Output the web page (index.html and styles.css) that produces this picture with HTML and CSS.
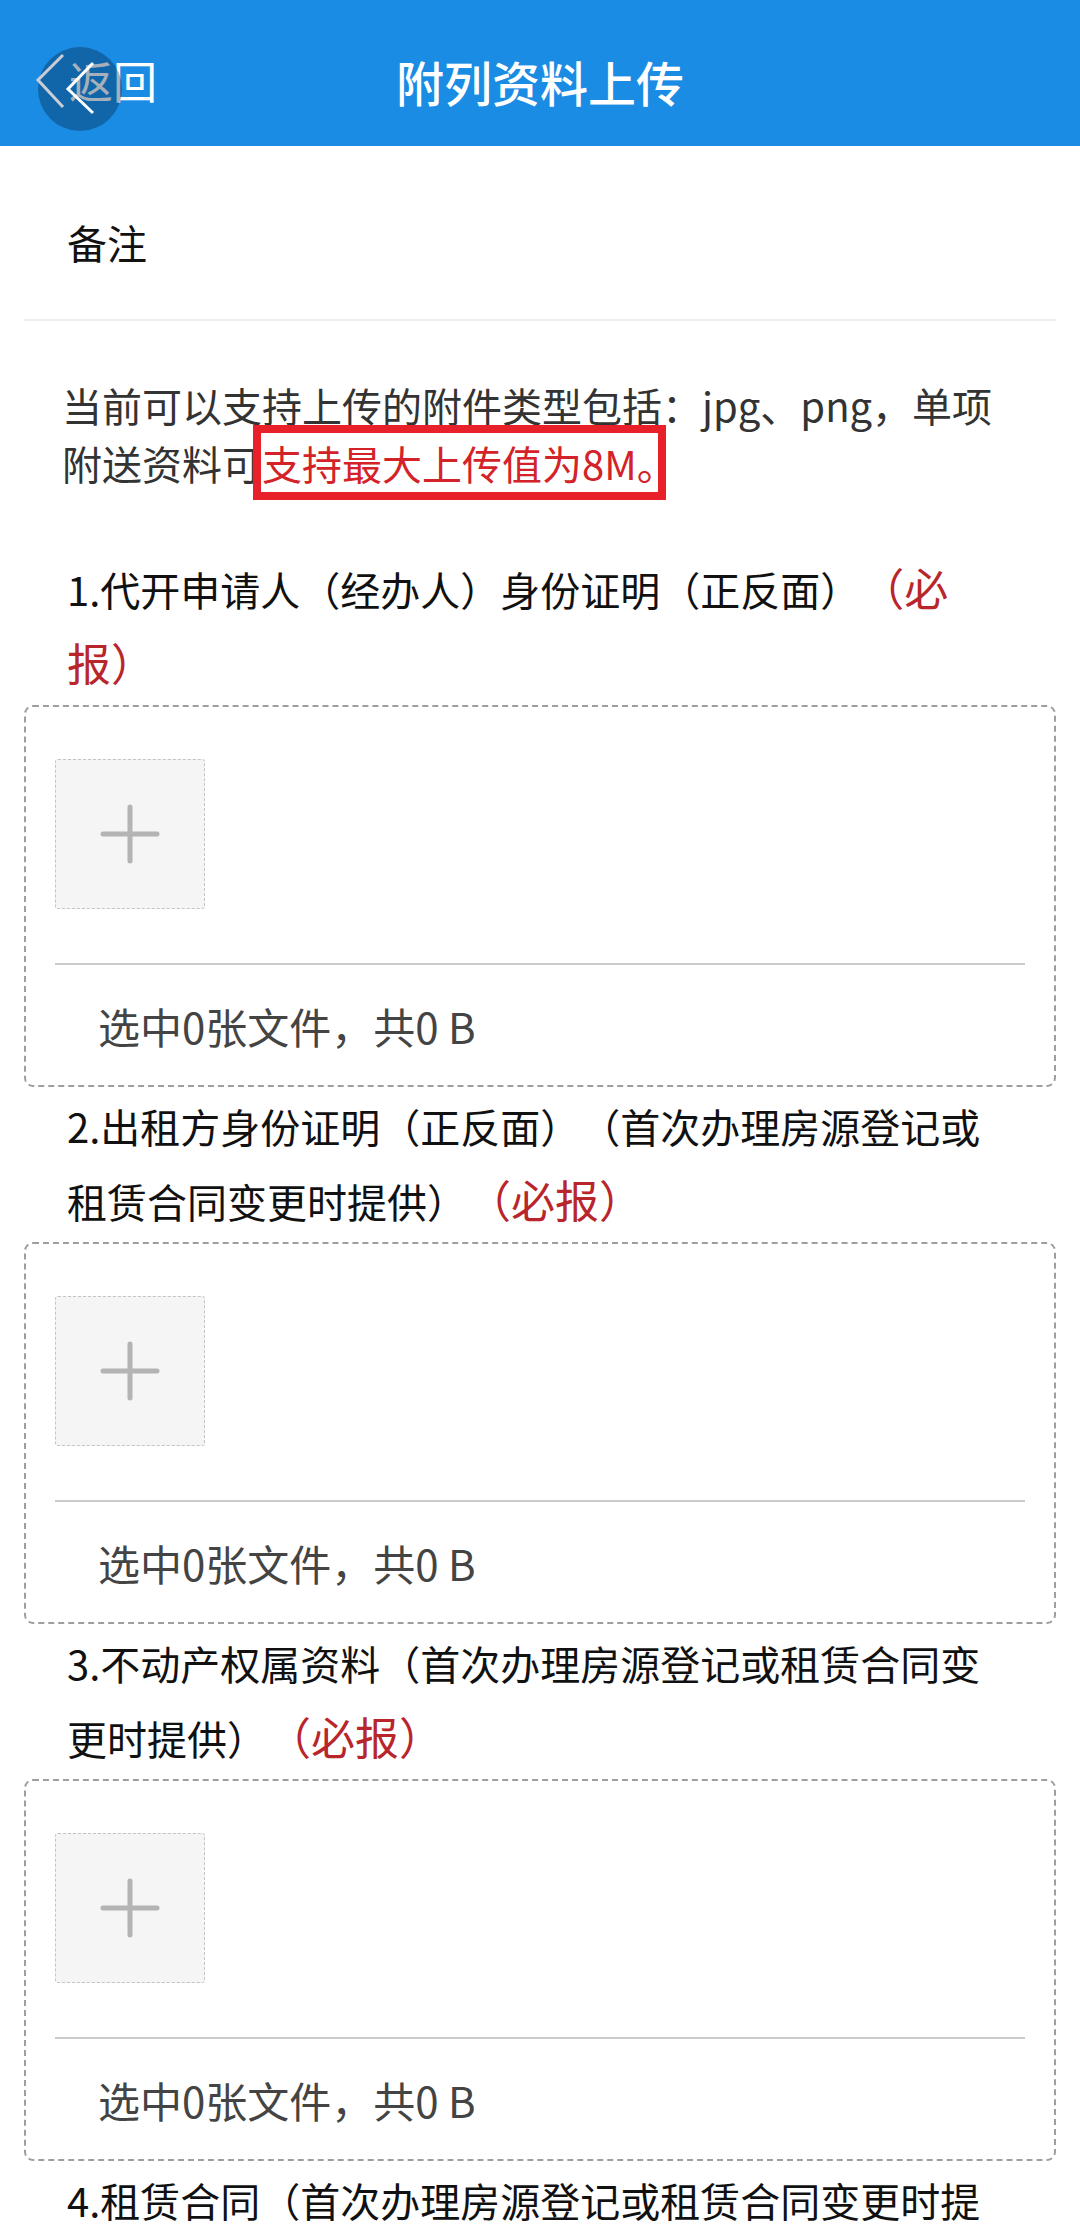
FILE: index.html
```html
<!DOCTYPE html>
<html lang="zh-CN">
<head>
  <meta charset="UTF-8" />
  <title>附列资料上传</title>
  <link rel="stylesheet" href="styles.css">
</head>
<body>

  <!-- TOP BAR -->
  <header class="topbar">
    <div class="back">
      <span class="back-text">返回</span>
      <span class="back-circle"></span>
      <svg class="back-arrows" viewBox="0 0 84 84" width="84" height="84">
        <polyline points="25,8 0,33 25,60" fill="none" stroke="#c9ced6" stroke-width="3" />
        <polyline points="55,16 30,42 55,66" fill="none" stroke="#ffffff" stroke-width="3" />
      </svg>
    </div>
    <h1 class="topbar-title">附列资料上传</h1>
    <div></div>
  </header>

  <main class="page">
    <div class="remark">备注</div>

    <p class="notice">
      当前可以支持上传的附件类型包括：jpg、png，单项附送资料可<span class="notice-mark">支持最大上传值为8M。</span>
    </p>

    <section class="item">
      <div class="item-title">1.代开申请人（经办人）身份证明（正反面）<span class="must">（必报）</span></div>
      <div class="upload">
        <div class="upload-tile">
          <svg viewBox="0 0 60 60" width="60" height="60"><path d="M30 3v54M3 30h54" stroke="#b4b4b4" stroke-width="5" stroke-linecap="round" fill="none"/></svg>
        </div>
        <div class="upload-line"></div>
        <div class="upload-info">选中0张文件，共0 B</div>
      </div>
    </section>

    <section class="item">
      <div class="item-title">2.出租方身份证明（正反面）（首次办理房源登记或租赁合同变更时提供）<span class="must">（必报）</span></div>
      <div class="upload">
        <div class="upload-tile">
          <svg viewBox="0 0 60 60" width="60" height="60"><path d="M30 3v54M3 30h54" stroke="#b4b4b4" stroke-width="5" stroke-linecap="round" fill="none"/></svg>
        </div>
        <div class="upload-line"></div>
        <div class="upload-info">选中0张文件，共0 B</div>
      </div>
    </section>

    <section class="item">
      <div class="item-title">3.不动产权属资料（首次办理房源登记或租赁合同变更时提供）<span class="must">（必报）</span></div>
      <div class="upload">
        <div class="upload-tile">
          <svg viewBox="0 0 60 60" width="60" height="60"><path d="M30 3v54M3 30h54" stroke="#b4b4b4" stroke-width="5" stroke-linecap="round" fill="none"/></svg>
        </div>
        <div class="upload-line"></div>
        <div class="upload-info">选中0张文件，共0 B</div>
      </div>
    </section>

    <section class="item">
      <div class="item-title">4.租赁合同（首次办理房源登记或租赁合同变更时提供）<span class="must">（必报）</span></div>
      <div class="upload">
        <div class="upload-tile">
          <svg viewBox="0 0 60 60" width="60" height="60"><path d="M30 3v54M3 30h54" stroke="#b4b4b4" stroke-width="5" stroke-linecap="round" fill="none"/></svg>
        </div>
        <div class="upload-line"></div>
        <div class="upload-info">选中0张文件，共0 B</div>
      </div>
    </section>
  </main>

</body>
</html>
```

FILE: styles.css
```css
body {
  margin: 0;
  background: #fff;
  font-family: "Noto Sans CJK SC", "Noto Sans", sans-serif;
  color: #111;
  text-spacing-trim: space-all;
}

/* TOP BAR */
.topbar {
  display: grid;
  grid-template-columns: 1fr auto 1fr;
  align-items: start;
  height: 146px;
  padding: 0 38px;
  background-color: #1b8ce3;
  color: #fff;
}

.back {
  position: relative;
  width: 84px;
  height: 84px;
  margin-top: 47px;
}

.back-text {
  display: block;
  padding-left: 31px;
  font-size: 44px;
  line-height: 66px;
  white-space: nowrap;
}

.back-circle {
  position: absolute;
  left: 0;
  top: 0;
  width: 84px;
  height: 84px;
  border-radius: 50%;
  background: rgba(0, 30, 60, 0.35);
}

.back-arrows {
  position: absolute;
  left: 0;
  top: 0;
  overflow: visible;
}

.topbar-title {
  margin: 0;
  padding-top: 16px;
  font-size: 48px;
  font-weight: 500;
  line-height: 130px;
}

/* CONTENT */
.page {
  padding: 0 24px;
}

.remark {
  padding: 67px 43px 48px;
  font-size: 40px;
  line-height: 58px;
  border-bottom: 2px solid #ededed;
}

.notice {
  margin: 55px 0 0;
  padding: 0 38px;
  font-size: 40px;
  line-height: 58px;
  color: #333;
}

.notice-mark {
  position: relative;
  color: #d42229;
}

/* hand-drawn red frame over the size limit */
.notice-mark::after {
  content: "";
  position: absolute;
  left: -9px;
  right: 11px;
  top: -9px;
  bottom: -8px;
  border: 8px solid #e8202a;
  box-sizing: border-box;
}

.notice + .item {
  margin-top: 56px;
}

.item-title {
  padding: 3px 43px 0;
  font-size: 40px;
  line-height: 73px;
}

.must {
  font-size: 44px;
  color: #b8262b;
}

.upload {
  height: 382px;
  box-sizing: border-box;
  margin-top: 4px;
  padding: 52px 29px 0;
  border: 2px dashed #9e9e9e;
  border-radius: 9px;
}

.upload-tile {
  display: flex;
  align-items: center;
  justify-content: center;
  width: 150px;
  height: 150px;
  box-sizing: border-box;
  border: 1px dashed #c4c4c4;
  border-radius: 3px;
  background: #f5f5f5;
}

.upload-line {
  height: 2px;
  margin-top: 54px;
  background: #cbcbcb;
}

.upload-info {
  display: flex;
  align-items: center;
  height: 120px;
  padding-left: 43px;
  font-size: 42px;
  color: #444;
}
```
